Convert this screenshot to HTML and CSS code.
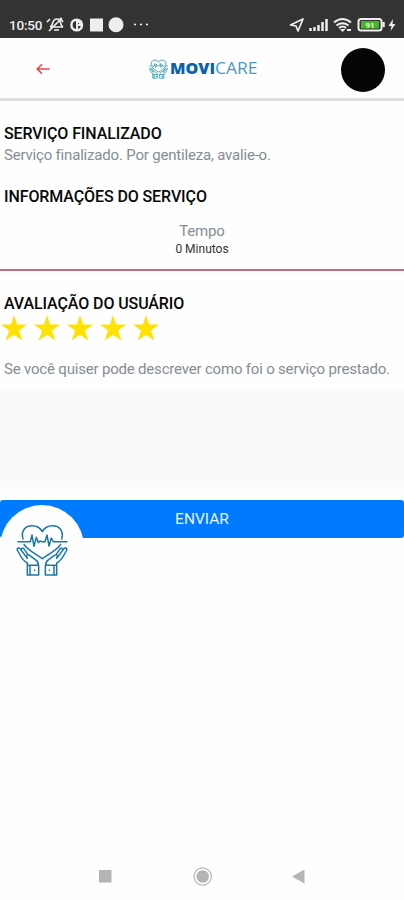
FILE: index.html
```html
<!DOCTYPE html>
<html lang="pt-BR">
<head>
<meta charset="utf-8">
<title>Movicare</title>
<link rel="stylesheet" href="styles.css">
</head>
<body>
<svg class="defs" width="0" height="0">
  <symbol id="care" viewBox="48 68 156 160">
    <g fill="none" stroke="currentColor" stroke-linecap="round" stroke-linejoin="round">
      <path d="M69 115C62 92 75 75 96 75c16 0 25 6 31 18 6-12 15-18 31-18 21 0 34 17 27 40M72 131c9 16 34 28 55 43 21-15 46-27 55-43"/>
      <path d="M54 123h37l5-20 6 34 7-27 6 16 5-5 5 2h10l6-20 6 33 7-24 6 11h41"/>
      <path d="M82 194v-7c-18-9-21-25-30-38-2-7 5-10 9-4l21 28M64 147c0-6 6-6 9-1l10 15M82 173c-5-10 2-14 8-8l16 12c7 4 9 9 9 17M82 194h34v29H82zM90 194v29"/>
      <path d="M170 194v-7c18-9 21-25 30-38 2-7-5-10-9-4l-21 28M188 147c0-6-6-6-9-1l-10 15M170 173c5-10-2-14-8-8l-16 12c-7 4-9 9-9 17M136 194h34v29h-34zM162 194v29"/>
      <path d="M104 208v1M148 208v1"/>
    </g>
  </symbol>
  <symbol id="star" viewBox="0 0 26 26"><path fill="#ffe200" d="M13 0l3.100 9.600H26l-8 6 3.300 10L13 19.800l-8.300 5.800 3.300-10-8-6h9.900z"/></symbol>
</svg>
<div class="status">
  <span class="clock">10:50</span>
  <svg class="left-icons" width="110" height="20" viewBox="46 15 110 20" fill="none" stroke="#eee" stroke-width="1.700">
    <path d="M50 27c4-1 1-8 7-8 5 0 2 6 6 8zM54 30h5M49 31L62 18M47 22l3-3M60 18l3 4"/>
    <circle cx="76.700" cy="25" r="5.300" stroke-width="2.500"/><path d="M77 30v-8h3v3h-3" stroke-width="2"/>
    <path d="M90 18.500h13v13H90z" fill="#eee" stroke="none"/><circle cx="116" cy="24.700" r="7.500" fill="#eee" stroke="none"/>
    <g fill="#eee" stroke="none"><circle cx="135" cy="24.500" r="1.100"/><circle cx="141" cy="24.500" r="1.100"/><circle cx="147" cy="24.500" r="1.100"/></g>
  </svg>
  <svg class="right-icons" width="112" height="20" viewBox="288 15 112 20" fill="none" stroke="#eee" stroke-width="1.700">
    <path d="M290.500 25l12.500-6-5 12-2-5z" stroke-linejoin="round"/>
    <path d="M310.500 31v-3M314.500 31v-4M318.500 31v-6M322.500 31v-9M326.500 31V19" stroke-width="2.500"/>
    <path d="M334 22.500q8.500-7 17 0M336.500 25.500q6-4.500 12 0M339 28q3.500-3 7 0" stroke-width="2"/><path d="M340 29l2.500 3 3-3zM347 29h4v2h-4z" fill="#eee" stroke="none"/>
    <rect x="358.500" y="19" width="23" height="11.500" rx="2.500" stroke-width="2"/><path d="M383.500 22v5" stroke-width="2.500"/>
    <path d="M361 21h18v7.500h-18z" fill="#47b52c" stroke="none"/><text x="370" y="28" text-anchor="middle" class="charge">91</text>
    <path d="M393 19l-4.500 7h3l-1 5 5-7h-3z" fill="#eee" stroke="none"/>
  </svg>
</div>
<header>
  <svg class="back" width="14" height="12" viewBox="0 0 14 12" fill="none" stroke="#e34449" stroke-width="1.500"><path d="M13.500 6H1.500M6 1.200L1.200 6 6 10.800"/></svg>
  <div class="brand">
    <svg class="brand-icon" width="19" height="20"><use href="#care"/></svg>
    <svg class="name" width="89" height="24"><text y="17" class="wordmark"><tspan class="bold" textLength="45" lengthAdjust="spacingAndGlyphs">MOVI</tspan><tspan x="45" textLength="42.500" lengthAdjust="spacingAndGlyphs">CARE</tspan></text></svg>
  </div>
  <div class="avatar"></div>
</header>
<main>
  <h2 class="done">SERVIÇO FINALIZADO</h2>
  <p class="intro">Serviço finalizado. Por gentileza, avalie-o.</p>
  <h2 class="info">INFORMAÇÕES DO SERVIÇO</h2>
  <div class="time"><span class="label">Tempo</span><span class="value">0 Minutos</span></div>
  <h2 class="rating">AVALIAÇÃO DO USUÁRIO</h2>
  <div class="stars"><svg><use href="#star"/></svg><svg><use href="#star"/></svg><svg><use href="#star"/></svg><svg><use href="#star"/></svg><svg><use href="#star"/></svg></div>
  <p class="hint">Se você quiser pode descrever como foi o serviço prestado.</p>
  <div class="comment"></div>
  <div class="action">
    <button>ENVIAR</button>
    <div class="badge"><svg width="52" height="54"><use href="#care"/></svg></div>
  </div>
</main>
<nav>
  <svg width="404" height="24" viewBox="0 864 404 24" fill="#b4b4b4"><path d="M99 870h12.500v12.500H99zM304.500 869.500v14l-12.500-7z"/><circle cx="202.700" cy="876.500" r="6.300"/><circle cx="202.700" cy="876.500" r="8.700" fill="none" stroke="#b4b4b4" stroke-width="1.200"/></svg>
</nav>
</body>
</html>
```
FILE: styles.css
```css
* { box-sizing: border-box; }
body { margin: 0; width: 404px; height: 900px; overflow: hidden; display: flex; flex-direction: column; background: #fefefe; font-family: Roboto, sans-serif; }
.defs { position: absolute; }
svg { display: block; flex: none; }
.status { height: 38px; background: #333; display: flex; padding: 15px 4px 0 9px; color: #eee; flex: none; }
.clock { width: 37px; font-size: 13.500px; font-weight: 500; line-height: 20px; letter-spacing: -.2px; white-space: nowrap; }
.right-icons { margin-left: auto; }
.charge { font: bold 8px Roboto, sans-serif; fill: #e4f5d8; stroke: none; }
header { height: 63px; border-bottom: 3px solid #dedede; display: flex; align-items: center; flex: none; padding: 2px 19px 0 36px; }
.brand { display: flex; align-items: center; margin-left: 99px; }
.brand-icon { color: #4ba5b9; stroke-width: 8; margin-right: 2px; }
.name { overflow: visible; }
.wordmark { font: 400 15.500px "Open Sans", sans-serif; fill: #4b98c6; }
.bold { font-weight: 800; fill: #0962ae; }
.avatar { width: 44px; height: 44px; border-radius: 50%; background: #050505; margin: 1px 0 0 auto; }
main { display: flex; flex-direction: column; }
h2, p { margin: 0 0 0 4px; white-space: nowrap; line-height: 20px; font-weight: 400; }
h2 { font-size: 16px; font-weight: 500; letter-spacing: -.1px; color: #080808; }
p { color: #858d95; font-size: 15px; letter-spacing: -.19px; }
.done { margin-top: 23px; }
.intro { margin-top: 1px; }
.info { margin-top: 22px; }
.time { display: flex; flex-direction: column; align-items: center; margin-top: 14px; height: 50px; border-bottom: 2px solid #c36a7e; }
.label { font-size: 15px; line-height: 20px; letter-spacing: -.2px; color: #858d95; }
.value { font-size: 12px; line-height: 16px; color: #333; }
.rating { margin-top: 23px; }
.stars { display: flex; gap: 7px; padding-left: 1px; margin-top: 1px; }
.stars svg { width: 26px; height: 26px; }
.hint { margin-top: 18px; }
.comment { height: 97px; margin-top: 11px; background: #fafafa; }
.action { position: relative; margin-top: 13px; }
button { display: block; width: 100%; height: 38px; border: 0; border-radius: 3px; background: #007bff; color: #edf6ff; font: 15.500px Roboto, sans-serif; }
.badge { position: absolute; left: 0; top: 5px; width: 84px; height: 84px; border-radius: 50%; background: #fefefe; padding: 18px 0 0 16px; color: #1977a8; stroke-width: 4.500; }
nav { margin-top: auto; padding-bottom: 12px; }
```
